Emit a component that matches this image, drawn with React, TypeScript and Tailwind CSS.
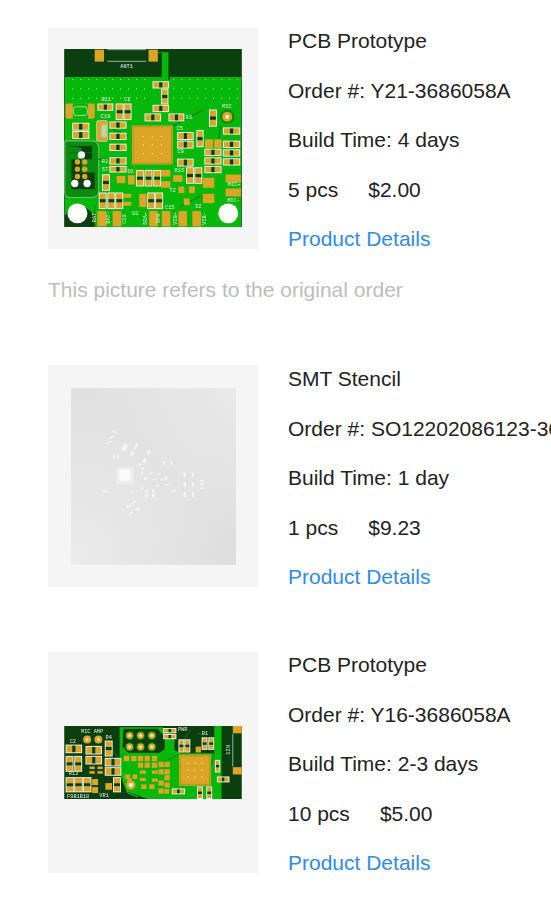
type Part = [number, number, number, number];

const PAD = "#dca526";
const SILK = "#e6ece6";
const DARK = "#0b3f10";
const GREEN = "#05b80a";

/* Two-pad SMD part with its white silk frame. */
function Chip({ x, y, w, h }: { x: number; y: number; w: number; h: number }) {
  const tall = h > w;
  return (
    <g>
      <rect x={x} y={y} width={w} height={h} fill={SILK} />
      {tall ? (
        <>
          <rect x={x + 3} y={y + 3} width={w - 6} height={h * 0.4 - 3} fill={PAD} />
          <rect x={x + 3} y={y + h * 0.6} width={w - 6} height={h * 0.4 - 3} fill={PAD} />
          <rect x={x + 3} y={y + h * 0.4} width={w - 6} height={h * 0.2} fill={DARK} />
        </>
      ) : (
        <>
          <rect x={x + 3} y={y + 3} width={w * 0.4 - 3} height={h - 6} fill={PAD} />
          <rect x={x + w * 0.6} y={y + 3} width={w * 0.4 - 3} height={h - 6} fill={PAD} />
          <rect x={x + w * 0.4} y={y + 3} width={w * 0.2} height={h - 6} fill={DARK} />
        </>
      )}
    </g>
  );
}

function Qfn({ x, y, w, h }: { x: number; y: number; w: number; h: number }) {
  return (
    <g>
      <rect x={x} y={y} width={w} height={h} fill={PAD} rx="3" />
      <rect x={x + 4} y={y + 4} width={w - 8} height={h - 8} fill="none" stroke="#0c7a10" strokeWidth="1.5" strokeDasharray="3 3" />
      <rect x={x + 12} y={y + 10} width={w - 24} height={h - 20} fill={PAD} />
      {[0.28, 0.5, 0.72].flatMap((fx) =>
        [0.28, 0.5, 0.72].map((fy) => (
          <circle key={`${fx}-${fy}`} cx={x + w * fx} cy={y + h * fy} r="2" fill="#f6e7b0" />
        )),
      )}
    </g>
  );
}

function Label({ x, y, t, rotate }: { x: number; y: number; t: string; rotate?: boolean }) {
  return (
    <text
      x={x}
      y={y}
      fill={SILK}
      fontSize="16"
      fontFamily="'Liberation Mono', monospace"
      textAnchor="middle"
      transform={rotate ? `rotate(-90 ${x} ${y})` : undefined}
    >
      {t}
    </text>
  );
}

const board1Chips: Part[] = [
  [314, 165, 50, 22], [340, 187, 22, 48], [314, 236, 50, 22], [290, 262, 50, 24], [362, 262, 48, 24],
  [148, 232, 48, 22], [203, 232, 24, 50], [227, 232, 24, 50], [72, 290, 52, 24], [72, 315, 52, 24],
  [184, 286, 52, 22], [184, 320, 52, 22], [184, 353, 52, 22], [184, 394, 52, 22], [184, 420, 52, 20],
  [388, 318, 50, 24], [388, 344, 50, 24], [388, 398, 50, 24], [446, 312, 22, 52], [484, 250, 24, 52],
  [526, 304, 52, 22], [526, 344, 52, 22], [526, 370, 52, 22], [526, 397, 52, 22], [470, 368, 52, 22],
  [470, 394, 52, 22], [470, 420, 52, 22], [415, 424, 24, 50], [440, 424, 24, 50], [264, 432, 24, 50],
  [290, 432, 24, 50], [316, 432, 24, 50], [162, 445, 24, 50], [152, 500, 24, 50], [178, 500, 24, 50],
  [202, 500, 24, 50], [298, 500, 24, 50], [322, 500, 24, 50],
];

const board1Pads: Part[] = [
  [148, 556, 28, 46], [194, 556, 26, 46], [304, 556, 26, 46], [342, 556, 26, 46], [392, 556, 26, 46],
  [434, 556, 26, 46], [466, 504, 34, 28], [466, 456, 34, 30], [534, 446, 46, 24], [534, 488, 46, 24],
  [340, 432, 28, 20], [340, 466, 28, 20], [376, 448, 28, 20], [392, 482, 18, 20], [424, 482, 18, 20],
  [408, 518, 18, 20], [472, 340, 24, 26], [500, 340, 22, 26], [226, 504, 24, 12], [226, 528, 24, 12],
  [274, 504, 22, 40], [206, 450, 26, 22], [240, 448, 20, 28],
];

function BoardOne() {
  return (
    <svg viewBox="48 68 535 536" className="h-[178px] w-[178px] blur-[0.35px]" aria-hidden>
      <rect x="48" y="68" width="535" height="536" fill={DARK} />
      <path d="M50 152H342V80H330V78H362V162H366V152H581V604H50Z" fill={GREEN} />
      <path d="M50 345H130Q150 345 152 365V500Q150 515 130 515H68Q50 515 50 500Z" fill="#0a8d0e" stroke={SILK} strokeWidth="1.5" />
      <path d="M62 360H132V400H70V490H140V440H100V365Z" fill={DARK} />
      <path d="M50 570Q90 510 140 570V604H50Z" fill={DARK} />
      <path d="M60 380H130M68 395L68 445L85 470M150 400H185M240 330L195 310M375 300L470 250M140 604V540M500 420L520 300M460 510L400 540" stroke="#066f0b" strokeWidth="3" fill="none" />
      {[0, 1, 2].map((r) =>
        Array.from({ length: 10 }).map((_, c) => (
          <circle key={`l${r}-${c}`} cx={74 + c * 24} cy={160 + r * 28} r="1.6" fill="#d7f2c5" />
        )),
      )}
      {[0, 1, 2].map((r) =>
        Array.from({ length: 9 }).map((_, c) => (
          <circle key={`r${r}-${c}`} cx={378 + c * 24} cy={160 + r * 28} r="1.6" fill="#d7f2c5" />
        )),
      )}

      <rect x="140" y="70" width="28" height="36" fill={PAD} />
      <rect x="302" y="70" width="28" height="36" fill={PAD} />
      <path d="M178 70H295M178 105H295" stroke={SILK} strokeWidth="2" />
      <Label x={236} y={125} t="ANT1" />

      <rect x="52" y="232" width="88" height="46" rx="6" fill={PAD} />
      <rect x="74" y="232" width="46" height="46" fill={GREEN} />
      <rect x="76" y="242" width="42" height="26" rx="8" fill="none" stroke={SILK} strokeWidth="2" />
      <rect x="146" y="284" width="32" height="62" rx="4" fill={PAD} stroke="#c9c9a8" strokeWidth="3" />
      <rect x="160" y="296" width="16" height="38" fill="#b8d8b0" />

      {board1Pads.map(([x, y, w, h]) => (
        <rect key={`${x}-${y}`} x={x} y={y} width={w} height={h} fill={PAD} />
      ))}
      {board1Chips.map(([x, y, w, h]) => (
        <Chip key={`${x}-${y}`} x={x} y={y} w={w} h={h} />
      ))}

      <Qfn x={252} y={298} w={123} h={118} />

      <circle cx="539" cy="272" r="22" fill="#0a8d0e" />
      <circle cx="539" cy="272" r="15" fill={PAD} />
      <circle cx="539" cy="272" r="6" fill="#f3f3e6" />

      <circle cx="100" cy="387" r="11" fill="#fff" />
      <circle cx="80" cy="473" r="11" fill="#fff" />
      <circle cx="117" cy="473" r="11" fill="#fff" />
      {[408, 430, 452].flatMap((y) =>
        [88, 110].map((x) => <circle key={`${x}-${y}`} cx={x} cy={y} r="8" fill={PAD} />),
      )}
      <circle cx="88" cy="563" r="30" fill="#fff" />
      <circle cx="542" cy="563" r="30" fill="#fff" />

      <Label x={174} y={226} t="R11" />
      <Label x={238} y={226} t="C2" />
      <Label x={172} y={277} t="C19" />
      <Label x={538} y={247} t="MIC" />
      <Label x={171} y={412} t="R2" />
      <Label x={171} y={436} t="ST" />
      <Label x={248} y={440} t="D1" />
      <Label x={395} y={438} t="R15" />
      <Label x={396} y={312} t="C5" />
      <Label x={398} y={381} t="C9" />
      <Label x={424} y={280} t="E6" />
      <Label x={374} y={500} t="T2" />
      <Label x={262} y={568} t="U1" />
      <Label x={452} y={546} t="D2" />
      <Label x={366} y={550} t="C15" />
      <Label x={560} y={480} t="MIC+" />
      <Label x={558} y={528} t="MIC-" />
      <Label x={143} y={575} t="BAT" rotate />
      <Label x={187} y={575} t="BAT-" rotate />
      <Label x={233} y={580} t="C19" rotate />
      <Label x={296} y={578} t="SOA+" rotate />
      <Label x={338} y={578} t="SPK" rotate />
      <Label x={388} y={578} t="VIB+" rotate />
      <Label x={476} y={578} t="VIB-" rotate />
    </svg>
  );
}

const board3Chips: Part[] = [
  [52, 104, 50, 26], [112, 108, 50, 26], [112, 138, 50, 26], [52, 138, 24, 48], [78, 138, 24, 48],
  [52, 202, 26, 46], [78, 202, 26, 46], [104, 202, 26, 46], [170, 92, 24, 48], [170, 144, 50, 26],
  [170, 172, 50, 26], [195, 202, 24, 46], [392, 88, 18, 40], [410, 88, 18, 40], [462, 82, 18, 38],
  [482, 82, 18, 38], [346, 54, 40, 16], [346, 72, 40, 16], [502, 150, 16, 38], [508, 200, 38, 18],
  [372, 236, 40, 18], [448, 230, 18, 38], [476, 230, 18, 38],
];

const board3Pads: Part[] = [
  [132, 208, 18, 18], [132, 232, 18, 18], [172, 220, 20, 20], [228, 138, 16, 16], [250, 138, 16, 16],
  [270, 138, 16, 16], [290, 138, 16, 16], [312, 138, 16, 16], [270, 158, 16, 16], [290, 158, 16, 16],
  [312, 158, 16, 16], [332, 156, 16, 16], [350, 156, 16, 16], [332, 178, 16, 16], [350, 178, 16, 16],
  [332, 212, 16, 16], [350, 196, 16, 16], [350, 218, 16, 16], [332, 236, 16, 16], [350, 238, 14, 14],
  [232, 194, 14, 14], [254, 194, 14, 14], [238, 206, 14, 14], [280, 224, 16, 14], [304, 224, 16, 14],
  [276, 182, 18, 10], [276, 204, 18, 10], [312, 182, 18, 10], [312, 206, 18, 10], [444, 110, 16, 18],
  [124, 170, 16, 8], [124, 184, 16, 8], [148, 170, 16, 8], [148, 184, 16, 8],
];

function BoardThree() {
  return (
    <svg viewBox="48 48 535 220" className="h-[73px] w-[178px] blur-[0.35px]" aria-hidden>
      <rect x="48" y="48" width="535" height="220" fill={DARK} />
      <path d="M215 52H345L380 80V120L400 130H500V48H522V268H300L235 245L215 190Z" fill={GREEN} />
      <path d="M225 55H330L352 80V118L335 130H240L222 110Z" fill={DARK} stroke="#16d01a" strokeWidth="2" />
      <path d="M225 190L240 250L270 262" stroke="#16d01a" strokeWidth="3" fill="none" />
      <path d="M215 150L170 90M230 130L190 170M360 150L392 135M500 130L490 170M430 60L400 100M470 75L450 70" stroke="#0a7a0e" strokeWidth="3" fill="none" />

      {[245, 278, 312].map((x) => (
        <g key={x}>
          <circle cx={x} cy="77" r="13" fill="#0a8d0e" />
          <circle cx={x} cy="77" r="10" fill={PAD} />
          <circle cx={x} cy="77" r="4" fill="#f3f3e6" />
          <circle cx={x} cy="111" r="13" fill="#0a8d0e" />
          <circle cx={x} cy="111" r="10" fill={PAD} />
          <circle cx={x} cy="111" r="4" fill="#f3f3e6" />
        </g>
      ))}
      {[117, 151].map((x) => (
        <g key={x}>
          <circle cx={x} cy="89" r="12" fill={PAD} />
          <circle cx={x} cy="89" r="4" fill="#f3f3e6" />
        </g>
      ))}
      <circle cx="249" cy="226" r="14" fill={PAD} />
      <circle cx="249" cy="226" r="7" fill="#f3f3e6" />

      <rect x="556" y="48" width="27" height="22" fill={PAD} />
      <rect x="556" y="172" width="27" height="22" fill={PAD} />
      <path d="M556 72V170" stroke={SILK} strokeWidth="2" />

      {board3Pads.map(([x, y, w, h]) => (
        <rect key={`${x}-${y}`} x={x} y={y} width={w} height={h} fill={PAD} />
      ))}
      {board3Chips.map(([x, y, w, h]) => (
        <Chip key={`${x}-${y}`} x={x} y={y} w={w} h={h} />
      ))}

      <Qfn x={394} y={134} w={96} h={94} />

      <Label x={132} y={68} t="MIC AMP" />
      <Label x={74} y={100} t="C2" />
      <Label x={182} y={88} t="R4" />
      <Label x={405} y={64} t="PWR" />
      <Label x={472} y={76} t="R1" />
      <Label x={168} y={262} t="VR1" />
      <Label x={90} y={266} t="F9B1B10" />
      <Label x={76} y={195} t="R13" />
      <Label x={549} y={120} t="1IN" rotate />
    </svg>
  );
}

/* Stencil openings: x, y, w, h in the zoomed frame. */
const stencilOpenings: Part[] = [
  [345, 290, 7, 12], [367, 290, 7, 12], [407, 324, 7, 14], [431, 324, 7, 14], [407, 354, 7, 14],
  [431, 354, 7, 14], [407, 384, 7, 14], [431, 384, 7, 14], [456, 348, 14, 4], [456, 358, 14, 4],
  [456, 370, 14, 4], [292, 376, 8, 10], [312, 376, 8, 10], [292, 390, 8, 10], [312, 390, 8, 10],
  [195, 270, 5, 14], [207, 270, 5, 14], [164, 379, 14, 5], [248, 382, 10, 5], [368, 379, 16, 4],
  [276, 370, 10, 4], [304, 325, 12, 4], [326, 328, 12, 4], [312, 344, 14, 4], [335, 344, 12, 4],
  [350, 338, 8, 10], [322, 362, 10, 4], [350, 360, 12, 4], [288, 338, 8, 10], [280, 310, 6, 8],
  [280, 322, 6, 10],
];

const stencilTilted: [number, number, number, number, number][] = [
  [192, 200, 14, 5, 30], [183, 216, 16, 5, -30], [174, 232, 16, 5, -30], [223, 238, 14, 22, 30],
  [260, 238, 8, 16, 30], [248, 262, 8, 14, 30], [298, 258, 8, 14, 30], [286, 281, 9, 16, 30],
  [268, 300, 12, 4, -20], [252, 412, 14, 5, -30], [234, 424, 14, 5, -30], [262, 432, 14, 5, -30],
  [242, 444, 14, 5, -30],
];

function StencilSheet() {
  return (
    <svg viewBox="69 72 495 530" className="h-[177px] w-[165px] blur-[0.35px]" aria-hidden>
      <defs>
        <linearGradient id="sheet" x1="1" y1="0" x2="0" y2="1">
          <stop offset="0" stopColor="#e9e9e9" />
          <stop offset="0.45" stopColor="#e2e2e2" />
          <stop offset="1" stopColor="#ebebeb" />
        </linearGradient>
        <linearGradient id="shade" x1="0" y1="0" x2="1" y2="1">
          <stop offset="0" stopColor="#dedede" stopOpacity="0.6" />
          <stop offset="0.5" stopColor="#e4e4e4" stopOpacity="0" />
          <stop offset="1" stopColor="#dcdcdc" stopOpacity="0.8" />
        </linearGradient>
      </defs>
      <rect x="69" y="72" width="495" height="530" fill="url(#sheet)" />
      <rect x="69" y="72" width="495" height="530" fill="url(#shade)" />
      <rect x="205" y="309" width="52" height="50" fill="#eeeeee" />
      <rect x="214" y="316" width="33" height="33" fill="#fbfbfb" />
      {stencilOpenings.map(([x, y, w, h]) => (
        <rect key={`${x}-${y}`} x={x} y={y} width={w} height={h} fill="#f4f4f4" />
      ))}
      {stencilTilted.map(([x, y, w, h, a]) => (
        <rect
          key={`${x}-${y}`}
          x={x}
          y={y}
          width={w}
          height={h}
          fill="#f4f4f4"
          transform={`rotate(${a} ${x + w / 2} ${y + h / 2})`}
        />
      ))}
    </svg>
  );
}

type Order = {
  name: string;
  no: string;
  time: string;
  qty: string;
  price: string;
  picture: React.ReactNode;
};

const orders: Order[] = [
  { name: "PCB Prototype", no: "Y21-3686058A", time: "4 days", qty: "5 pcs", price: "$2.00", picture: <BoardOne /> },
  { name: "SMT Stencil", no: "SO12202086123-3686058A", time: "1 day", qty: "1 pcs", price: "$9.23", picture: <StencilSheet /> },
  { name: "PCB Prototype", no: "Y16-3686058A", time: "2-3 days", qty: "10 pcs", price: "$5.00", picture: <BoardThree /> },
];

function OrderRow({ order }: { order: Order }) {
  return (
    <div className="flex w-[551px] gap-[30px] pl-12">
      <div className="flex h-[222px] w-[210px] shrink-0 items-center justify-center bg-[#f5f5f5]">
        {order.picture}
      </div>
      <div className="flex flex-col gap-[25.5px] whitespace-nowrap pt-[2px] text-[21px] leading-[24px] text-[#222]">
        <p>{order.name}</p>
        <p>Order #: {order.no}</p>
        <p>Build Time: {order.time}</p>
        <p className="flex gap-[30px]">
          <span>{order.qty}</span>
          <span>{order.price}</span>
        </p>
        <a href="#" className="text-[#2f8af0]">
          Product Details
        </a>
      </div>
    </div>
  );
}

export default function App() {
  return (
    <div className="h-[901px] w-[551px] overflow-hidden bg-white pt-[27px] font-['Liberation_Sans',Arial,sans-serif]">
      <OrderRow order={orders[0]} />
      <p className="mt-[27px] pl-12 text-[21px] leading-[24px] text-[#bdbdbd]">
        This picture refers to the original order
      </p>
      <div className="mt-[63px]">
        <OrderRow order={orders[1]} />
      </div>
      <div className="mt-[62px]">
        <OrderRow order={orders[2]} />
      </div>
    </div>
  );
}
